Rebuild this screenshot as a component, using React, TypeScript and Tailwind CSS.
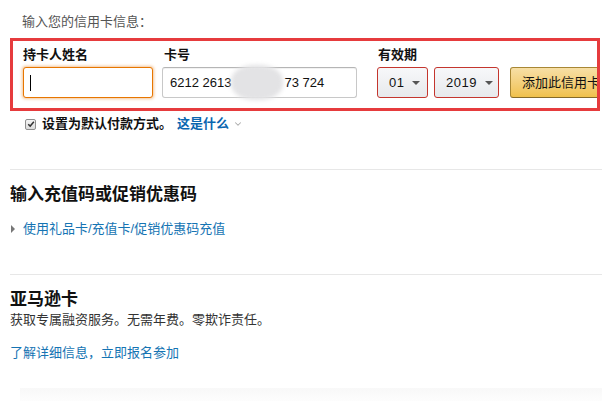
import { ChevronDown } from 'lucide-react';

const font = 'font-["Liberation_Sans","Noto_Sans_CJK_SC",sans-serif]';

function Caret() {
  return (
    <span className="ml-[8px] inline-block w-0 h-0 border-l-[4px] border-r-[4px] border-t-[4px] border-l-transparent border-r-transparent border-t-[#555]" />
  );
}

function SelectBox({ value, width }: { value: string; width: string }) {
  return (
    <div
      className={`${width} h-[31px] flex items-center pl-[11px] rounded-[3px] border border-[#c4362e] bg-gradient-to-b from-[#f7f8fa] to-[#e7e9ec] text-[13px] text-[#111] tracking-[0.5px]`}
    >
      {value}
      <Caret />
    </div>
  );
}

export default function App() {
  return (
    <div className={`relative w-[602px] h-[401px] overflow-hidden bg-white text-[13px] text-[#111] ${font}`}>
      <p className="pl-[22px] pt-[13px] leading-[18px] text-[#555]">输入您的信用卡信息：</p>

      {/* highlighted form row */}
      <div className="mt-[7px] ml-[10px] w-[590px] h-[73px] border-[3px] border-[#e63b3d] overflow-hidden">
        <div className="flex pt-[4px] pl-[10px] w-max">
          <div className="w-[130px]">
            <div className="leading-[20px] font-bold text-[#111]">持卡人姓名</div>
            <div className="mt-[2px] h-[31px] rounded-[3px] border border-[#e77600] bg-white shadow-[0_0_3px_1px_rgba(228,121,17,0.45)] flex items-center pl-[6px]">
              <span className="w-px h-[16px] bg-black" />
            </div>
          </div>

          <div className="ml-[9px] w-[195px]">
            <div className="leading-[20px] font-bold text-[#111] pl-[2px]">卡号</div>
            <div className="relative mt-[2px] h-[31px] rounded-[3px] border border-[#c8c8c8] border-t-[#b5b5b5] bg-white shadow-[inset_0_1px_0_rgba(0,0,0,0.05)] flex items-center pl-[7px] text-[13px] text-[#111]">
              <span>6212 2613</span>
              <span className="w-[53px]" />
              <span>73 724</span>
              <span className="absolute left-[68px] -top-[3px] w-[52px] h-[35px] rounded-[45%] bg-[#e3e3e5] blur-[2px]" />
            </div>
          </div>

          <div className="ml-[20px]">
            <div className="leading-[20px] font-bold text-[#111] pl-[1px]">有效期</div>
            <div className="mt-[2px] flex">
              <SelectBox value="01" width="w-[51px]" />
              <div className="ml-[6px]">
                <SelectBox value="2019" width="w-[65px]" />
              </div>
              <button className="ml-[11px] w-[110px] h-[31px] rounded-[3px] border border-[#a88734] border-b-[#846a29] bg-gradient-to-b from-[#f7dfa5] to-[#f0c14b] text-left pl-[11px] text-[13px] text-[#111]">
                添加此信用卡
              </button>
            </div>
          </div>
        </div>
      </div>

      <div className="mt-[5px] h-[16px] flex items-center pl-[25px]">
        <span className="w-[11px] h-[11px] border border-[#8f8f8f] rounded-[2px] bg-gradient-to-b from-[#f4f4f4] to-[#dcdcdc] flex items-center justify-center">
          <svg viewBox="0 0 10 10" className="w-[8px] h-[8px]">
            <path d="M1.5 5.2 L4 7.6 L8.6 2.2" fill="none" stroke="#333" strokeWidth="1.8" />
          </svg>
        </span>
        <span className="ml-[6px] font-bold text-[#111]">设置为默认付款方式。</span>
        <span className="ml-[5px] font-bold text-[#0a66b0]">这是什么</span>
        <ChevronDown className="ml-[4px] w-[10px] h-[10px] text-[#aaa]" strokeWidth={2.5} />
      </div>

      <div className="mt-[37px] ml-[10px] h-px bg-[#e7e7e7]" />

      <h2 className="mt-[13px] ml-[10px] text-[17px] leading-[24px] font-bold text-[#111]">输入充值码或促销优惠码</h2>
      <div className="mt-[13px] flex items-center pl-[11px] leading-[18px]">
        <span className="inline-block w-0 h-0 border-t-[4px] border-b-[4px] border-l-[4px] border-t-transparent border-b-transparent border-l-[#777]" />
        <span className="ml-[8px] text-[#1574b3]">使用礼品卡/充值卡/促销优惠码充值</span>
      </div>

      <div className="mt-[36px] ml-[10px] h-px bg-[#e7e7e7]" />

      <h2 className="mt-[14px] ml-[10px] text-[17px] leading-[22px] font-bold text-[#111]">亚马逊卡</h2>
      <p className="ml-[10px] leading-[18px] text-[#333]">获取专属融资服务。无需年费。零欺诈责任。</p>
      <p className="mt-[15px] ml-[10px] leading-[18px] text-[#1574b3]">了解详细信息，立即报名参加</p>

      <div className="absolute left-[20px] right-0 top-[388px] bottom-0 bg-gradient-to-b from-[#f8f8f8] to-[#fdfdfd]" />
    </div>
  );
}
